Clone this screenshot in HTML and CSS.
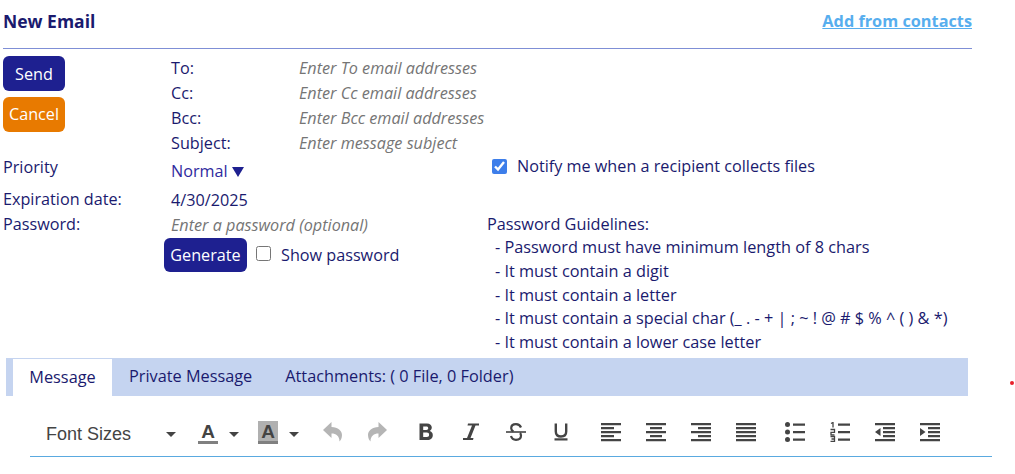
FILE: index.html
```html
<!DOCTYPE html>
<html lang="en">
<head>
    <meta charset="UTF-8">
    <title>New Email</title>
    <link rel="stylesheet" href="styles.css">
</head>
<body>
    <div class="page">
        <div class="header">
            <div class="title">New Email</div>
            <a class="contacts-link" href="#">Add from contacts</a>
        </div>
        <div class="compose">
            <div class="buttons">
                <button class="btn btn-send">Send</button>
                <button class="btn btn-cancel">Cancel</button>
            </div>
            <div class="fields">
                <div class="field"><label>To:</label><span class="hint">Enter To email addresses</span></div>
                <div class="field"><label>Cc:</label><span class="hint">Enter Cc email addresses</span></div>
                <div class="field"><label>Bcc:</label><span class="hint">Enter Bcc email addresses</span></div>
                <div class="field"><label>Subject:</label><span class="hint">Enter message subject</span></div>
            </div>
        </div>
        <div class="priority-row">
            <div class="priority-label">Priority</div>
            <div class="priority-value">Normal <span class="caret-big"></span></div>
            <label class="notify"><input type="checkbox" checked> Notify me when a recipient collects files</label>
        </div>
        <div class="lower">
            <div class="lower-left">
                <div class="row-date"><span class="row-label">Expiration date:</span><span class="row-value">4/30/2025</span></div>
                <div class="row-pass"><span class="row-label">Password:</span><span class="hint row-value">Enter a password (optional)</span></div>
                <div class="row-generate">
                    <button class="btn btn-generate">Generate</button>
                    <label class="show-pass"><input type="checkbox"> Show password</label>
                </div>
            </div>
            <div class="guidelines">
                <div class="guide-title">Password Guidelines:</div>
                <div>- Password must have minimum length of 8 chars</div>
                <div>- It must contain a digit</div>
                <div>- It must contain a letter</div>
                <div>- It must contain a special char (_ . - + | ; ~ ! @ # $ % ^ ( ) &amp; *)</div>
                <div>- It must contain a lower case letter</div>
            </div>
        </div>
        <div class="tabs">
            <div class="tab active">Message</div>
            <div class="tab tab-private">Private Message</div>
            <div class="tab tab-files">Attachments: ( 0 File, 0 Folder)</div>
        </div>
        <div class="toolbar">
            <div class="font-sizes">Font Sizes<span class="caret"></span></div>
            <div class="color-btn"><span class="color-a">A</span><span class="color-bar"></span></div><span class="caret caret-a"></span>
            <div class="color-btn color-btn-bg"><span class="color-a">A</span><span class="color-bar"></span></div><span class="caret caret-b"></span>
            <svg class="ico ico-undo" viewBox="0 0 20 20"><path d="M8.500 0 0 8 8.500 16V11.500C13 11.500 16.500 14 16.500 19.500 17.500 18.500 19 16.500 19 13 19 9 15 5 8.500 5Z" fill="#b5b5b5"/></svg>
            <svg class="ico ico-redo" viewBox="0 0 20 20"><path d="M11.500 0 20 8 11.500 16V11.500C7 11.500 3.500 14 3.500 19.500 2.500 18.500 1 16.500 1 13 1 9 5 5 11.500 5Z" fill="#b5b5b5"/></svg>
            <svg class="ico ico-bold" viewBox="0 0 20 20"><path d="M3.500 1.500H11C14 1.500 15.800 3.200 15.800 5.600 15.800 7.200 15 8.400 13.700 9 15.500 9.500 16.800 10.900 16.800 13 16.800 16.200 14.700 18 11.500 18H3.500ZM7.200 4.500V7.900H10.300C11.500 7.900 12.200 7.300 12.200 6.200 12.200 5.100 11.500 4.500 10.300 4.500ZM7.200 10.600V15H10.800C12.300 15 13.100 14.200 13.100 12.800 13.100 11.400 12.300 10.600 10.800 10.600Z" fill="#444" fill-rule="evenodd"/></svg>
            <svg class="ico ico-italic" viewBox="0 0 20 20"><path d="M7 1.500H18V3.500H14.500L9.500 16H12.500L12 18H2V16H6L11 3.500H6.500Z" fill="#444"/></svg>
            <svg class="ico ico-strike" viewBox="0 0 20 20"><path d="M15 5.500C14 3 12.300 2.200 10 2.200 7.500 2.200 5.200 3.500 5.200 6.200 5.200 7.800 6 8.800 7.500 9.500M5 14C5.800 16.800 7.700 17.800 10 17.800 12.800 17.800 15 16.500 15 13.500 15 12.500 14.600 11.500 13.900 11" fill="none" stroke="#444" stroke-width="2.200"/><rect y="9.200" width="20" height="1.600" fill="#444"/></svg>
            <svg class="ico ico-under" viewBox="0 0 20 20"><path d="M4.800 1.500V9.500C4.800 13 6.500 14.500 10 14.500 13.500 14.500 15.200 13 15.200 9.500V1.500" fill="none" stroke="#444" stroke-width="2.400"/><rect x="3.500" y="16.300" width="13" height="2.200" fill="#444"/></svg>
            <svg class="ico ico-left" viewBox="0 0 20 20"><path d="M0 1h20v2.200H0zM0 5h13v2.200H0zM0 9h20v2.200H0zM0 13h13v2.200H0zM0 17h20v2.200H0z" fill="#444"/></svg>
            <svg class="ico ico-center" viewBox="0 0 20 20"><path d="M0 1h20v2.200H0zM4 5h12v2.200H4zM0 9h20v2.200H0zM4 13h12v2.200H4zM0 17h20v2.200H0z" fill="#444"/></svg>
            <svg class="ico ico-right" viewBox="0 0 20 20"><path d="M0 1h20v2.200H0zM7 5h13v2.200H7zM0 9h20v2.200H0zM7 13h13v2.200H7zM0 17h20v2.200H0z" fill="#444"/></svg>
            <svg class="ico ico-justify" viewBox="0 0 20 20"><path d="M0 1h20v2.200H0zM0 5h20v2.200H0zM0 9h20v2.200H0zM0 13h20v2.200H0zM0 17h20v2.200H0z" fill="#444"/></svg>
            <svg class="ico ico-bullet" viewBox="0 0 20 20"><circle cx="2.500" cy="2.500" r="2.500" fill="#444"/><circle cx="2.500" cy="10" r="2.500" fill="#444"/><circle cx="2.500" cy="17.500" r="2.500" fill="#444"/><path d="M8 1.500h12v2.200H8zM8 9h12v2.200H8zM8 16.500h12v2.200H8z" fill="#444"/></svg>
            <svg class="ico ico-number" viewBox="0 0 20 20"><path d="M1 1.500 3 .500V5.500M.500 7.500H4.500V10.300H1V12.800H4.500M.500 14.500H4.500V19.500H.500M1.500 17H4.500" fill="none" stroke="#444" stroke-width="1.300"/><path d="M8 1.500h12v2.200H8zM8 9h12v2.200H8zM8 16.500h12v2.200H8z" fill="#444"/></svg>
            <svg class="ico ico-outdent" viewBox="0 0 20 20"><path d="M0 1h20v2.200H0zM8 5h12v2.200H8zM8 9h12v2.200H8zM8 13h12v2.200H8zM0 17h20v2.200H0zM5.500 6V14L0 10Z" fill="#444"/></svg>
            <svg class="ico ico-indent" viewBox="0 0 20 20"><path d="M0 1h20v2.200H0zM8 5h12v2.200H8zM8 9h12v2.200H8zM8 13h12v2.200H8zM0 17h20v2.200H0zM0 6V14L5.500 10Z" fill="#444"/></svg>
        </div>
    </div>
    <span class="red-dot"></span>
</body>
</html>
```

FILE: styles.css
```css
body {
    font-family: "Open Sans", sans-serif;
    font-size: 16.2px;
    color: #1a1a6e;
    margin: 0;
    padding: 0;
}
.page {
    width: 1015px;
    height: 474px;
    overflow: hidden;
}
.header {
    display: flex;
    justify-content: space-between;
    align-items: center;
    width: 969px;
    height: 41px;
    margin-left: 3px;
    border-bottom: 1px solid #7f8fd6;
    padding-bottom: 7px;
}
.title {
    font-size: 17.5px;
    font-weight: 700;
}
.contacts-link {
    color: #57aeee;
    font-weight: 700;
    font-size: 16.3px;
}
.compose {
    display: flex;
    margin-top: 7px;
    margin-left: 3px;
}
.buttons {
    width: 168px;
    display: flex;
    flex-direction: column;
    gap: 6px;
}
.btn {
    font-family: "Open Sans", sans-serif;
    font-size: 16.2px;
    color: #fff;
    border: none;
    border-radius: 6px;
    padding: 0;
    height: 35px;
}
.btn-send {
    width: 62px;
    background-color: #1e2090;
}
.btn-cancel {
    width: 62px;
    padding-bottom: 2px;
    background-color: #e87a00;
}
.fields {
    display: flex;
    flex-direction: column;
}
.field {
    display: flex;
    height: 25px;
    line-height: 25px;
}
.field label {
    width: 128px;
}
.hint {
    font-style: italic;
    color: #757575;
}
.priority-row {
    display: flex;
    margin-left: 3px;
    height: 31px;
}
.priority-label {
    width: 168px;
    line-height: 22px;
}
.priority-value {
    width: 321px;
    line-height: 30px;
    color: #2f2a9e;
}
.caret-big {
    display: inline-block;
    border-left: 6px solid transparent;
    border-right: 6px solid transparent;
    border-top: 10px solid #1e2090;
}
.notify {
    line-height: 20px;
    display: flex;
    align-items: center;
    gap: 10px;
    height: 20px;
}
.notify input, .show-pass input {
    margin: 0;
    width: 15px;
    height: 15px;
    accent-color: #3d7eea;
}
.show-pass input {
    margin-top: -4px;
}
.lower {
    display: flex;
    height: 171px;
    margin-left: 3px;
}
.lower-left {
    width: 485px;
}
.row-date, .row-pass {
    display: flex;
    height: 25px;
    line-height: 25px;
}
.row-label {
    width: 168px;
}
.row-value {
    padding-top: 1px;
}
.row-generate {
    display: flex;
    align-items: center;
    margin-top: 1px;
    margin-left: 161px;
    gap: 9px;
}
.btn-generate {
    width: 83px;
    height: 34px;
    background-color: #1e2090;
}
.show-pass {
    display: flex;
    align-items: center;
    gap: 10px;
}
.guidelines {
    font-size: 16.3px;
    line-height: 23.7px;
    margin-top: 25.4px;
    padding-left: 7px;
}
.guide-title {
    margin-left: -8px;
    padding-top: 1px;
    margin-bottom: -1px;
}
.tabs {
    display: flex;
    width: 962px;
    height: 38px;
    margin-left: 6px;
    font-size: 16.3px;
    background-color: #c5d4f0;
}
.tab {
    line-height: 37px;
}
.tab.active {
    width: 99px;
    margin-left: 7px;
    height: 39px;
    margin-top: 1px;
    background-color: #fff;
    text-align: center;
    line-height: 36px;
}
.tab-private {
    margin-left: 17px;
}
.tab-files {
    margin-left: 33px;
}
.toolbar {
    position: relative;
    width: 962px;
    height: 60px;
    margin-left: 30px;
    border-bottom: 1px solid #5aaae0;
    color: #444;
}
.font-sizes {
    position: absolute;
    left: 16px;
    top: 28px;
    font-family: "Liberation Sans", sans-serif;
    font-size: 18px;
}
.caret {
    display: inline-block;
    border-left: 5px solid transparent;
    border-right: 5px solid transparent;
    border-top: 5px solid #444;
}
.font-sizes .caret {
    position: absolute;
    left: 120px;
    top: 8px;
}
.caret-a {
    position: absolute;
    left: 199px;
    top: 36px;
}
.caret-b {
    position: absolute;
    left: 259px;
    top: 36px;
}
.color-btn {
    position: absolute;
    left: 168px;
    top: 25px;
    width: 20px;
    height: 24px;
    text-align: center;
}
.color-btn-bg {
    left: 228px;
}
.color-btn-bg .color-a {
    background-color: #b0b0b0;
}
.color-a {
    display: block;
    height: 20px;
    line-height: 21px;
    font-family: "Liberation Sans", sans-serif;
    font-size: 19px;
    font-weight: 700;
}
.color-bar {
    display: block;
    height: 3px;
    background-color: #808080;
}
.ico {
    position: absolute;
    top: 26px;
    width: 20px;
    height: 20px;
}
.ico-undo { left: 293px; }
.ico-redo { left: 337px; }
.ico-bold { left: 386px; }
.ico-italic { left: 431px; }
.ico-strike { left: 476px; }
.ico-under { left: 521px; }
.ico-left { left: 571px; }
.ico-center { left: 616px; }
.ico-right { left: 661px; }
.ico-justify { left: 706px; }
.ico-bullet { left: 755px; }
.ico-number { left: 800px; }
.ico-outdent { left: 845px; }
.ico-indent { left: 890px; }
.red-dot {
    position: absolute;
    left: 1010px;
    top: 381px;
    width: 4px;
    height: 4px;
    border-radius: 50%;
    background-color: #e8202a;
}
```
